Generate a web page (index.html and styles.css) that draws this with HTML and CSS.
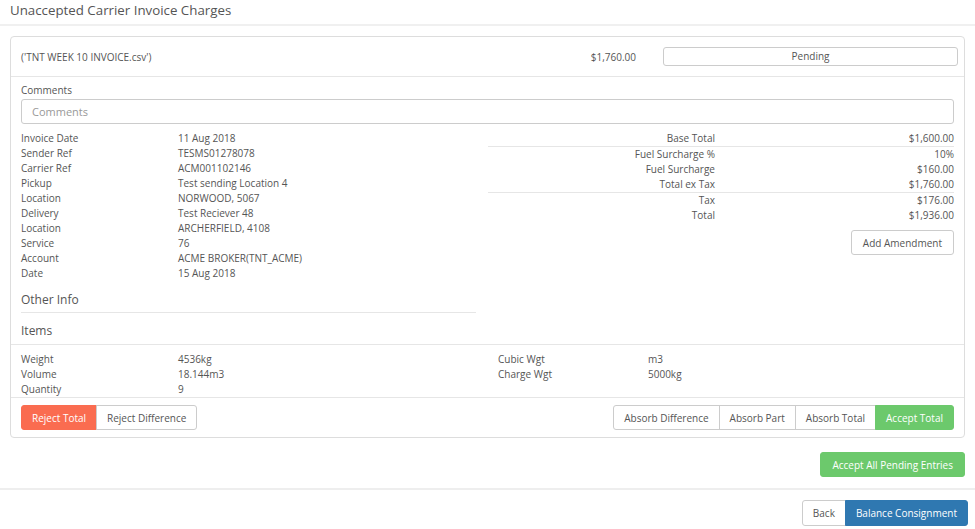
FILE: index.html
```html
<!DOCTYPE html>
<html lang="en">
<head>
    <meta charset="UTF-8">
    <title>Unaccepted Carrier Invoice Charges</title>
    <link rel="stylesheet" href="styles.css">
</head>
<body>
    <h3 class="page-title">Unaccepted Carrier Invoice Charges</h3>

    <div class="panel">
        <div class="panel-head">
            <span class="file-name">('TNT WEEK 10 INVOICE.csv')</span>
            <span class="head-amount">$1,760.00</span>
            <div class="status">Pending</div>
        </div>

        <div class="panel-body">
            <label class="field-label" for="comments">Comments</label>
            <input type="text" id="comments" class="comment-input" placeholder="Comments">

            <div class="info-grid">
                <div class="info-list">
                    <div class="info-row"><span>Invoice Date</span><span>11 Aug 2018</span></div>
                    <div class="info-row"><span>Sender Ref</span><span>TESMS01278078</span></div>
                    <div class="info-row"><span>Carrier Ref</span><span>ACM001102146</span></div>
                    <div class="info-row"><span>Pickup</span><span>Test sending Location 4</span></div>
                    <div class="info-row"><span>Location</span><span>NORWOOD, 5067</span></div>
                    <div class="info-row"><span>Delivery</span><span>Test Reciever 48</span></div>
                    <div class="info-row"><span>Location</span><span>ARCHERFIELD, 4108</span></div>
                    <div class="info-row"><span>Service</span><span>76</span></div>
                    <div class="info-row"><span>Account</span><span>ACME BROKER(TNT_ACME)</span></div>
                    <div class="info-row"><span>Date</span><span>15 Aug 2018</span></div>
                </div>

                <div class="totals">
                    <div class="total-row"><span>Base Total</span><span>$1,600.00</span></div>
                    <div class="total-row divider"><span>Fuel Surcharge %</span><span>10%</span></div>
                    <div class="total-row"><span>Fuel Surcharge</span><span>$160.00</span></div>
                    <div class="total-row"><span>Total ex Tax</span><span>$1,760.00</span></div>
                    <div class="total-row divider"><span>Tax</span><span>$176.00</span></div>
                    <div class="total-row"><span>Total</span><span>$1,936.00</span></div>
                    <div class="amend">
                        <button class="btn">Add Amendment</button>
                    </div>
                </div>
            </div>

            <h4 class="other-info">Other Info</h4>
        </div>

        <h4 class="items-head">Items</h4>

        <div class="items-grid">
            <div>
                <div class="info-row"><span>Weight</span><span>4536kg</span></div>
                <div class="info-row"><span>Volume</span><span>18.144m3</span></div>
                <div class="info-row"><span>Quantity</span><span>9</span></div>
            </div>
            <div class="items-right">
                <div class="info-row"><span>Cubic Wgt</span><span>m3</span></div>
                <div class="info-row"><span>Charge Wgt</span><span>5000kg</span></div>
            </div>
        </div>

        <div class="panel-foot">
            <div class="btn-group">
                <button class="btn btn-danger">Reject Total</button>
                <button class="btn">Reject Difference</button>
            </div>
            <div class="btn-group">
                <button class="btn">Absorb Difference</button>
                <button class="btn">Absorb Part</button>
                <button class="btn">Absorb Total</button>
                <button class="btn btn-success">Accept Total</button>
            </div>
        </div>
    </div>

    <div class="accept-all">
        <button class="btn btn-success">Accept All Pending Entries</button>
    </div>

    <div class="page-foot">
        <div class="btn-group">
            <button class="btn btn-tall">Back</button>
            <button class="btn btn-tall btn-primary">Balance Consignment</button>
        </div>
    </div>
</body>
</html>
```

FILE: styles.css
```css
body {
    font-family: "Open Sans", Arial, sans-serif;
    font-size: 10px;
    color: #555;
    background: #fff;
    margin: 0;
}

.page-title {
    margin: 0;
    padding: 1px 10px 0;
    height: 23px;
    font-size: 13.3px;
    font-weight: normal;
    color: #555;
    border-bottom: 2px solid #f0f0f0;
}

.panel {
    margin: 10px 10px 0;
    border: 1px solid #ddd;
    border-radius: 4px;
}

.panel-head {
    display: flex;
    align-items: center;
    height: 39px;
    padding: 0 6px 0 10px;
    border-bottom: 1px solid #e6e6e6;
}

.file-name {
    flex: 1;
}

.head-amount {
    margin-right: 27px;
}

.status {
    width: 293px;
    height: 17px;
    line-height: 17px;
    text-align: center;
    border: 1px solid #ccc;
    border-radius: 3px;
}

.panel-body {
    padding: 6px 10px 0;
}

.field-label {
    display: block;
    line-height: 15px;
}

.comment-input {
    display: block;
    box-sizing: border-box;
    width: 100%;
    height: 25px;
    margin-top: 1px;
    padding: 0 10px;
    font-family: inherit;
    font-size: 11px;
    color: #555;
    border: 1px solid #ccc;
    border-radius: 3px;
}

.comment-input::placeholder {
    color: #999;
}

.info-grid {
    display: grid;
    grid-template-columns: 467px 1fr;
    margin-top: 7px;
}

.info-row {
    display: flex;
    line-height: 15px;
}

.info-row span:first-child {
    width: 157px;
}

.totals {
    display: flex;
    flex-direction: column;
}

.total-row {
    display: flex;
    line-height: 15px;
}

.total-row span:first-child {
    width: 227px;
    text-align: right;
}

.total-row span:last-child {
    flex: 1;
    text-align: right;
}

.total-row.divider {
    border-top: 1px solid #e6e6e6;
}

.amend {
    display: flex;
    justify-content: flex-end;
    margin-top: 7px;
}

.other-info {
    width: 455px;
    margin: 10px 0 0;
    padding-bottom: 4px;
    line-height: 17px;
    font-size: 12px;
    font-weight: normal;
    border-bottom: 1px solid #e6e6e6;
}

.items-head {
    margin: 0;
    padding: 9px 10px 5px;
    line-height: 17px;
    font-size: 12px;
    font-weight: normal;
    border-bottom: 1px solid #e6e6e6;
}

.items-grid {
    display: grid;
    grid-template-columns: 477px 1fr;
    padding: 7px 10px 0;
    border-bottom: 1px solid #e6e6e6;
}

.items-right .info-row span:first-child {
    width: 150px;
}

.panel-foot {
    display: flex;
    justify-content: space-between;
    padding: 7px 10px 7px;
}

.btn-group {
    display: flex;
}

.btn {
    height: 25px;
    padding: 0 10px;
    font-family: inherit;
    font-size: 10px;
    color: #555;
    background: #fff;
    border: 1px solid #ccc;
    border-radius: 3px;
    cursor: pointer;
}

.btn-group .btn {
    border-radius: 0;
    margin-left: -1px;
}

.btn-group .btn:first-child {
    margin-left: 0;
    border-radius: 3px 0 0 3px;
}

.btn-group .btn:last-child {
    border-radius: 0 3px 3px 0;
}

.btn-danger {
    color: #fff;
    background: #fa6c50;
    border-color: #fa6c50;
}

.btn-success {
    color: #fff;
    background: #6cc96c;
    border-color: #6cc96c;
}

.btn-primary {
    color: #fff;
    background: #2f78b1;
    border-color: #2f78b1;
}

.btn-tall {
    height: 26px;
    padding: 0 10px;
}

.amend .btn,
.accept-all .btn {
    padding: 0 11px;
}

.accept-all {
    display: flex;
    justify-content: flex-end;
    padding: 14px 10px 11px;
    border-bottom: 2px solid #eee;
}

.page-foot {
    display: flex;
    justify-content: flex-end;
    padding: 10px 7px 0;
}
```
